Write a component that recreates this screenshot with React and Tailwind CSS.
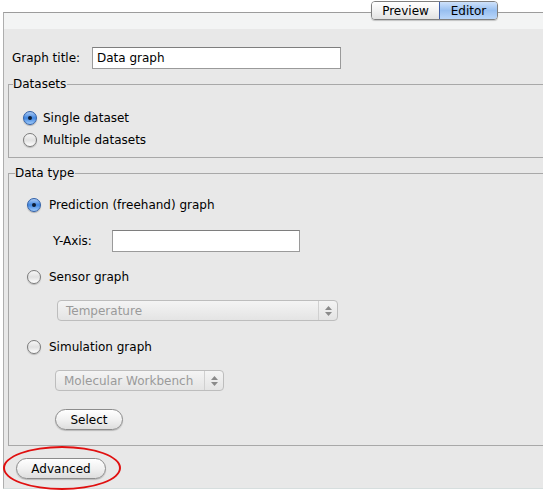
import React from 'react';

const font = { fontFamily: '"DejaVu Sans", "Liberation Sans", sans-serif' };

function Radio({ checked, label, gap = 'ml-[8px]' }) {
  return (
    <div className="flex h-[20px] items-center">
      {checked ? (
        <span className="flex h-[14px] w-[14px] items-center justify-center rounded-full border border-[#2f5fa8] bg-gradient-to-b from-[#a9c9f2] via-[#3f86e0] to-[#9fcaf9] shadow-[0_1px_1px_rgba(0,0,0,0.25)]">
          <span className="h-[4px] w-[4px] rounded-full bg-[#0d1d33]" />
        </span>
      ) : (
        <span className="h-[14px] w-[14px] rounded-full border border-[#7a7a7a] bg-gradient-to-b from-[#f7f7f7] via-[#e1e1e1] to-[#ffffff] shadow-[0_1px_1px_rgba(0,0,0,0.2)]" />
      )}
      <span className={`${gap} text-[12px] text-black`}>{label}</span>
    </div>
  );
}

function Popup({ label, className }) {
  return (
    <div className={`flex h-[21px] items-stretch rounded-[4px] border border-[#bdbdbd] bg-gradient-to-b from-[#f4f4f4] to-[#e4e4e4] ${className}`}>
      <span className="flex flex-1 items-center pl-[8px] text-[12px] text-[#9a9a9a]">{label}</span>
      <span className="flex w-[19px] flex-col items-center justify-center gap-[2px] border-l border-[#d0d0d0]">
        <svg width="7" height="4" viewBox="0 0 7 4"><path d="M3.5 0 L7 4 L0 4 Z" fill="#8a8a8a" /></svg>
        <svg width="7" height="4" viewBox="0 0 7 4"><path d="M0 0 L7 0 L3.5 4 Z" fill="#8a8a8a" /></svg>
      </span>
    </div>
  );
}

function PillButton({ label, className }) {
  return (
    <button
      type="button"
      className={`flex h-[21px] items-center justify-center rounded-full border border-[#8c8c8c] bg-gradient-to-b from-[#ffffff] via-[#f1f1f1] to-[#dedede] text-[12px] text-black shadow-[0_1px_1px_rgba(0,0,0,0.2)] ${className}`}
    >
      {label}
    </button>
  );
}

export default function App() {
  return (
    <div className="relative h-[500px] w-[543px] overflow-hidden bg-white" style={font}>
      <div className="ml-[3px] mt-[12px] border-b border-l border-t border-b-[#d6dede] border-l-[#aeaeae] border-t-[#9c9c9c] bg-[#e8e8e8]">
        <div className="h-[16px] bg-[#f3f4f4]" />

        <div className="mt-[18px] flex items-center pl-[8px]">
          <span className="w-[80px] text-[12px] text-black">Graph title:</span>
          <div className="flex h-[22px] w-[249px] items-center border border-[#9a9a9a] border-t-[#7e7e7e] bg-white pl-[4px] text-[12px] text-black">
            Data graph
          </div>
        </div>

        <fieldset className="ml-[4px] mt-[7px] border border-r-0 border-[#a8a8a8] pb-[7px] pl-[14px]">
          <legend className="-ml-[10px] pr-[1px] text-[12px] leading-[16px] text-black">Datasets</legend>
          <div className="mt-[16px] flex flex-col gap-[2px]">
            <Radio checked label="Single dataset" gap="ml-[6px]" />
            <Radio label="Multiple datasets" gap="ml-[6px]" />
          </div>
        </fieldset>

        <fieldset className="ml-[4px] mt-[7px] border border-r-0 border-[#a8a8a8] pb-[15px] pl-[18px]">
          <legend className="-ml-[12px] pr-[1px] text-[12px] leading-[16px] text-black">Data type</legend>
          <div className="mt-[14px]">
            <Radio checked label="Prediction (freehand) graph" />
          </div>
          <div className="ml-[26px] mt-[15px] flex items-center">
            <span className="w-[59px] text-[12px] text-black">Y-Axis:</span>
            <div className="h-[22px] w-[188px] border border-[#9a9a9a] border-t-[#7e7e7e] bg-white" />
          </div>
          <div className="mt-[15px]">
            <Radio label="Sensor graph" />
          </div>
          <Popup label="Temperature" className="ml-[30px] mt-[13px] w-[281px]" />
          <div className="mt-[16px]">
            <Radio label="Simulation graph" />
          </div>
          <Popup label="Molecular Workbench" className="ml-[28px] mt-[13px] w-[169px]" />
          <PillButton label="Select" className="ml-[28px] mt-[18px] w-[68px]" />
        </fieldset>

        <div className="pb-[9px] pl-[12px] pt-[12px]">
          <PillButton label="Advanced" className="h-[20px] w-[90px]" />
        </div>
      </div>

      {/* segmented tab control, sits over the panel's top border */}
      <div className="absolute left-[371px] top-[1px] flex h-[19px] overflow-hidden rounded-[4px] border border-[#7f7f7f] text-[12px] shadow-[0_1px_1px_rgba(0,0,0,0.2)]">
        <span className="flex w-[67px] items-center justify-center bg-gradient-to-b from-[#ffffff] via-[#f2f2f2] to-[#e2e2e2] text-black">Preview</span>
        <span className="flex w-[58px] items-center justify-center border-l border-[#3f5fa8] bg-gradient-to-b from-[#cfe2fb] via-[#98bff0] to-[#b9d6fa] text-black">Editor</span>
      </div>

      {/* red highlight ring */}
      <div className="pointer-events-none absolute left-[3px] top-[446px] h-[44px] w-[118px] rounded-[50%] border-2 border-[#e01010]" />
    </div>
  );
}
